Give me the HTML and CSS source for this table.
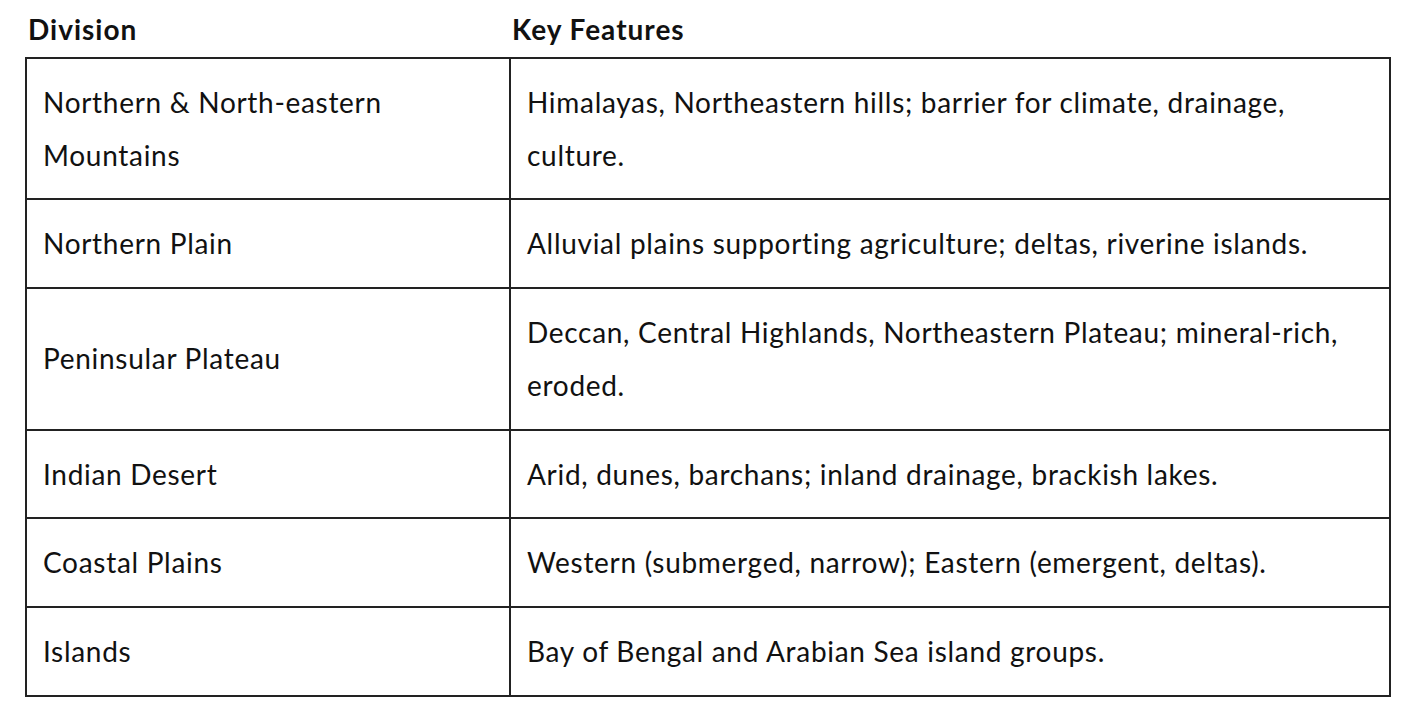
FILE: index.html
```html
<!DOCTYPE html>
<html lang="en">
<head>
<meta charset="utf-8">
<title>Divisions</title>
<link rel="stylesheet" href="styles.css">
</head>
<body>
<div class="wrap">
<table class="divs">
<thead>
<tr><th class="c1">Division</th><th class="c2">Key Features</th></tr>
</thead>
<tbody>
<tr><td>Northern &amp; North-eastern Mountains</td><td>Himalayas, Northeastern hills; barrier for climate, drainage, culture.</td></tr>
<tr><td>Northern Plain</td><td>Alluvial plains supporting agriculture; deltas, riverine islands.</td></tr>
<tr><td>Peninsular Plateau</td><td>Deccan, Central Highlands, Northeastern Plateau; mineral-rich, eroded.</td></tr>
<tr><td>Indian Desert</td><td>Arid, dunes, barchans; inland drainage, brackish lakes.</td></tr>
<tr><td>Coastal Plains</td><td>Western (submerged, narrow); Eastern (emergent, deltas).</td></tr>
<tr><td>Islands</td><td>Bay of Bengal and Arabian Sea island groups.</td></tr>
</tbody>
</table>
</div>
</body>
</html>
```
FILE: styles.css
```css
html, body { margin: 0; padding: 0; background: #fff; }
body { font-family: Lato, "Open Sans", sans-serif; color: #111; }
.wrap { padding: 0 13px 0 25px; }
.divs { border-collapse: collapse; width: 1366px; font-size: 28px; letter-spacing: 0.7px; table-layout: fixed; }
.divs th { text-align: left; font-weight: 700; height: 57px; padding: 0 2px; vertical-align: middle; line-height: 1; letter-spacing: 1px; }
.divs th.c1 { width: 480px; }
.divs td { border: 2px solid #222; padding: 17px 16px; line-height: 52.7px; vertical-align: middle; }
```
